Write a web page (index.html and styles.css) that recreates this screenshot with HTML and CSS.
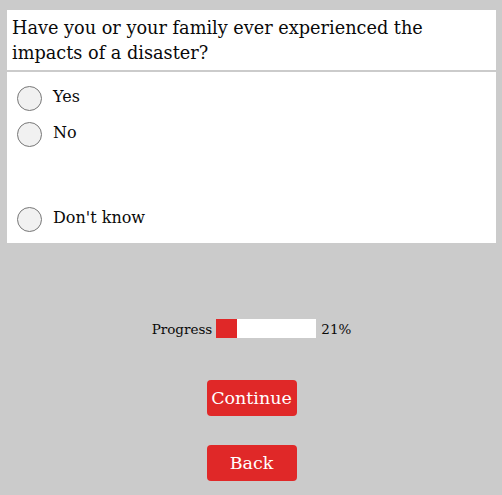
FILE: index.html
```html
<!DOCTYPE html>
<html>
<head>
<meta charset="utf-8">
<link rel="stylesheet" href="styles.css">
</head>
<body>
<div class="page">
  <div class="question">Have you or your family ever experienced the impacts of a disaster?</div>
  <div class="options">
    <label class="option"><span class="radio"></span><span class="label">Yes</span></label>
    <label class="option"><span class="radio"></span><span class="label">No</span></label>
    <div class="spacer"></div>
    <label class="option"><span class="radio"></span><span class="label">Don't know</span></label>
  </div>
  <div class="progress">
    <span class="progress-text">Progress</span>
    <span class="bar"><span class="fill" style="width:21%"></span></span>
    <span class="pct">21%</span>
  </div>
  <div class="buttons">
    <button class="btn">Continue</button>
    <button class="btn">Back</button>
  </div>
</div>
</body>
</html>
```

FILE: styles.css
```css
html, body {
  margin: 0;
  padding: 0;
  background: #cbcbcb;
}
body {
  font-family: "DejaVu Serif", "Liberation Serif", serif;
  color: #0a0a0a;
}
.page {
  padding: 10px 6px 0 7px;
}
.question {
  background: #fff;
  font-size: 17.7px;
  line-height: 25px;
  padding: 6px 5px 4px 5px;
  height: 50px;
}
.options {
  background: #fff;
  margin-top: 2px;
  padding: 14px 10px 0 10px;
  display: flex;
  flex-direction: column;
}
.option {
  display: flex;
  align-items: center;
  height: 24px;
  margin-bottom: 12px;
  flex: none;
}
.spacer {
  height: 49px;
  flex: none;
}
.radio {
  width: 23px;
  height: 23px;
  border: 1px solid #777;
  border-radius: 50%;
  background: #f1f1f1;
  flex: none;
}
.label {
  font-size: 16px;
  margin-left: 11px;
  margin-top: -3px;
}
.progress {
  display: flex;
  justify-content: center;
  align-items: center;
  margin-top: 76px;
  height: 19px;
  font-size: 13.5px;
}
.progress-text {
  margin-right: 4px;
}
.bar {
  display: block;
  width: 100px;
  height: 19px;
  background: #fff;
}
.fill {
  display: block;
  height: 100%;
  background: #e02828;
}
.pct {
  margin-left: 5px;
}
.buttons {
  display: flex;
  flex-direction: column;
  align-items: center;
  gap: 29px;
  margin-top: 42px;
}
.btn {
  width: 90px;
  height: 36px;
  border: none;
  border-radius: 4px;
  background: #e02828;
  color: #fff;
  font-family: "DejaVu Serif", "Liberation Serif", serif;
  font-size: 17.5px;
  padding: 0;
}
```
